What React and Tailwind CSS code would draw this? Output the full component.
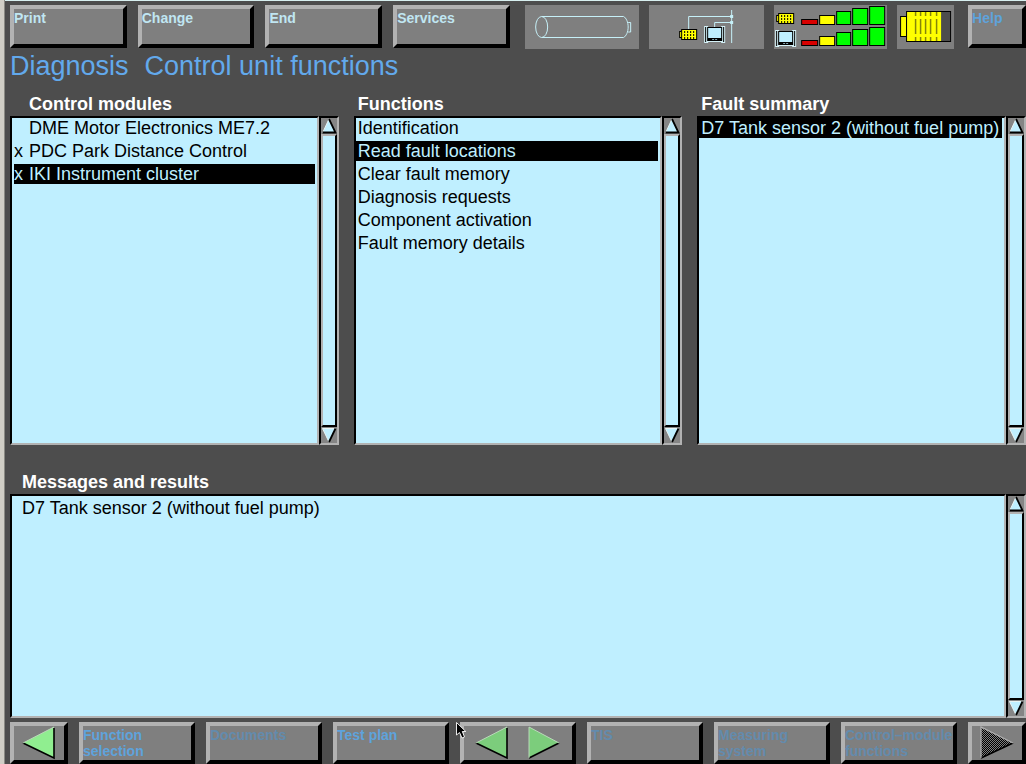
import React, { useState } from "react";

const bevel =
  "border-4 border-t-[#b2b2b2] border-l-[#b2b2b2] border-r-black border-b-black bg-[#7f7f7f]";

function TopButton({ label, tone = "text-[#c0e6f2]" }) {
  return (
    <button
      type="button"
      className={`flex h-[43px] w-full items-start overflow-hidden text-left text-sm leading-4 font-bold ${bevel} ${tone}`}
    >
      <span className="pt-px">{label}</span>
    </button>
  );
}

function FootButton({ children, disabled }) {
  return (
    <button
      type="button"
      disabled={disabled}
      className={`flex items-start overflow-hidden text-left text-sm leading-4 font-bold whitespace-pre ${bevel} ${
        disabled ? "text-[#638bad]" : "text-[#5ea3dc]"
      }`}
    >
      <span className="pt-px">{children}</span>
    </button>
  );
}

function GreenArrow({ direction, fill }) {
  return direction === "left" ? (
    <svg width="34" height="34" viewBox="0 0 34 34" aria-hidden="true">
      <path d="M1 17 L32 1 V32 Z" fill={fill} />
      <path d="M32 2 V32 L1 17" fill="none" stroke="#000" strokeWidth="1.6" />
      <path d="M1 17 L32 1" stroke="#b9d9b9" strokeWidth="1" />
    </svg>
  ) : (
    <svg width="34" height="34" viewBox="0 0 34 34" aria-hidden="true">
      <path d="M2 1 L32 17 L2 32 Z" fill={fill} />
      <path d="M2 32 L32 17" stroke="#000" strokeWidth="1.8" />
      <path d="M2 32 V1 L32 17" fill="none" stroke="#b9d9b9" strokeWidth="1" />
    </svg>
  );
}

function DimArrow() {
  return (
    <svg width="36" height="34" viewBox="0 0 36 34" aria-hidden="true">
      <defs>
        <pattern id="dots" width="2" height="2" patternUnits="userSpaceOnUse">
          <rect width="2" height="2" fill="#7f7f7f" />
          <rect width="1" height="1" fill="#000" />
          <rect x="1" y="1" width="1" height="1" fill="#000" />
        </pattern>
      </defs>
      <path d="M2 1 L34 17 L2 32 Z" fill="url(#dots)" />
      <path d="M2 32 L34 17" stroke="#000" strokeWidth="1.8" />
      <path d="M2 32 V1 L34 17" fill="none" stroke="#b2b2b2" strokeWidth="1.2" />
    </svg>
  );
}

function ScrollBar({ name }) {
  return (
    <div className="flex w-5 shrink-0 flex-col border-2 border-t-black border-r-[#b2b2b2] border-b-[#b2b2b2] border-l-black bg-[#858585]">
      <button type="button" aria-label={`Scroll ${name} up`} className="h-4 w-full">
        <svg className="block" width="16" height="16" viewBox="0 0 16 16">
          <path d="M8 1 L14.500 15 H1.500 Z" fill="#bfefff" />
          <path d="M8 1 L1.500 15" stroke="#e8f4f4" />
          <path d="M8 1 L14.500 14.500 H1.500" fill="none" stroke="#000" strokeWidth="1.8" />
        </svg>
      </button>
      <div className="flex-1 border-2 border-t-[#b2b2b2] border-r-black border-b-black border-l-[#b2b2b2] bg-[#bfefff]" />
      <button type="button" aria-label={`Scroll ${name} down`} className="h-4 w-full">
        <svg className="block" width="16" height="16" viewBox="0 0 16 16">
          <path d="M1.500 1.500 H14.500 L8 15 Z" fill="#bfefff" />
          <path d="M8 15 L1.500 1.500 H14.500" fill="none" stroke="#e8f4f4" />
          <path d="M14.500 1.500 L8 15" stroke="#000" strokeWidth="1.8" />
        </svg>
      </button>
    </div>
  );
}

function Pane({ name, children }) {
  return (
    <div className="flex min-h-0 flex-1">
      <div className="min-w-0 flex-1 border-2 border-t-black border-r-[#b2b2b2] border-b-[#b2b2b2] border-l-black bg-[#bfefff]">
        {children}
      </div>
      <ScrollBar name={name} />
    </div>
  );
}

function ListColumn({ title, items, initial, marked }) {
  const [selected, setSelected] = useState(initial);
  return (
    <section className="flex min-w-0 flex-col">
      <h2 className={`h-6 leading-[25px] font-bold text-white ${marked ? "pl-[19px]" : "pl-1"}`}>{title}</h2>
      <Pane name={title}>
        <ul className={`flex flex-col gap-[3px] pr-0.5 ${marked ? "pl-0.5" : "pl-0"}`}>
          {items.map((item, i) => (
            <li key={item.label}>
              <button
                type="button"
                aria-pressed={i === selected}
                onClick={() => setSelected(i)}
                className={`flex h-5 w-full overflow-hidden text-left leading-5 whitespace-nowrap ${
                  i === selected ? "bg-black text-[#bfefff]" : "text-black"
                } ${marked ? "" : "pl-0.5"}`}
              >
                {marked && <span className="w-[15px] shrink-0">{item.mark}</span>}
                {item.label}
              </button>
            </li>
          ))}
        </ul>
      </Pane>
    </section>
  );
}

function SmallBattery({ x, y }) {
  return (
    <g transform={`translate(${x} ${y})`}>
      <rect x="0.5" y="2.5" width="3" height="6" fill="#ff0" stroke="#000" />
      <rect x="2.5" y="0.5" width="15" height="10" fill="#ff0" stroke="#000" />
      <path
        d="M5.500 2V10M8.500 2V10M11.500 2V10M14.500 2V10"
        stroke="#000"
        strokeWidth="1"
        strokeDasharray="2 1"
      />
    </g>
  );
}

function Monitor({ x, y }) {
  return (
    <g transform={`translate(${x} ${y})`}>
      <path d="M0 0H4V1H17V0H21V17H17V16H4V17H0Z" fill="#d5f2f8" />
      <path d="M1.500 1V16M19.500 1V16" stroke="#000" />
      <rect x="3" y="1" width="15" height="14" fill="#000" />
      <rect x="4" y="2" width="13" height="10" fill="#bfefff" />
      <path d="M8 13.500H10M11 13.500H13" stroke="#bfefff" strokeWidth="0.7" />
    </g>
  );
}

const bars = [
  { x: 27.5, w: 16, fill: "#d80000", a: 14.5, b: 35.5 },
  { x: 45.5, w: 15, fill: "#ff0", a: 10.5, b: 31.5 },
  { x: 62.5, w: 14, fill: "#0f0", a: 6.5, b: 27.5 },
  { x: 78.5, w: 15, fill: "#0f0", a: 3.5, b: 24.5 },
  { x: 95.5, w: 15, fill: "#0f0", a: 1.5, b: 22.5 },
];

function StatusPanel({ label, box, children }) {
  return (
    <div className="h-11 bg-[#7f7f7f]">
      <svg className="block h-full w-full" viewBox={box} role="img" aria-label={label}>
        {children}
      </svg>
    </div>
  );
}

function StatusPanels() {
  return (
    <div className="grid min-w-0 flex-[430] grid-cols-[114fr_114fr_113fr_57fr] gap-2.5 pl-px">
      <StatusPanel label="Progress" box="0 0 114 44">
        <g fill="none" stroke="#c6f0f8">
          <ellipse cx="16.500" cy="22" rx="6" ry="10.500" />
          <path d="M16.500 11.500H98.500C101 13 103 17 103 22S101 31 98.500 32.500H16.500M103 17.500H105.500V27H103" />
        </g>
      </StatusPanel>
      <StatusPanel label="Network connection" box="0 0 114 44">
        <path d="M82.500 5V38M39.500 24V11.500H82M65.500 22V17.500H82" fill="none" stroke="#c6f0f8" />
        <path d="M81 10h3v3h-3zM81 16h3v3h-3z" fill="#c6f0f8" />
        <SmallBattery x={30} y={24} />
        <Monitor x={55} y={21} />
      </StatusPanel>
      <StatusPanel label="Signal strength" box="0 0 113 44">
        <SmallBattery x={2} y={8} />
        <Monitor x={1} y={25} />
        {bars.map((r) => (
          <g key={r.x} fill={r.fill} stroke="#000">
            <rect x={r.x} y={r.a} width={r.w} height={19.5 - r.a} />
            <rect x={r.x} y={r.b} width={r.w} height={40.5 - r.b} />
          </g>
        ))}
      </StatusPanel>
      <StatusPanel label="Battery level" box="0 0 57 44">
        <rect x="3.500" y="11.500" width="6" height="20" fill="#ff0" stroke="#000" />
        <rect x="9.500" y="6.500" width="44" height="30" fill="#4d4d4d" stroke="#000" />
        <rect x="10" y="7" width="34" height="29" fill="#ff0" />
        <path
          d="M18.500 7v4m0 3v15m0 3v4M23.500 7v4m0 3v15m0 3v4M28.500 7v4m0 3v15m0 3v4M33.500 7v4m0 3v15m0 3v4M39.500 7v4m0 3v15m0 3v4"
          stroke="#85850a"
          strokeWidth="1.500"
        />
      </StatusPanel>
    </div>
  );
}

const modules = [
  { mark: "", label: "DME Motor Electronics ME7.2" },
  { mark: "x", label: "PDC Park Distance Control" },
  { mark: "x", label: "IKI Instrument cluster" },
];

const functions = [
  { label: "Identification" },
  { label: "Read fault locations" },
  { label: "Clear fault memory" },
  { label: "Diagnosis requests" },
  { label: "Component activation" },
  { label: "Fault memory details" },
];

const faults = [{ label: "D7 Tank sensor 2 (without fuel pump)" }];

export default function App() {
  return (
    <div className="flex min-h-screen bg-[#4d4d4d] font-['Liberation_Sans',Arial,sans-serif] text-[18px]">
      <div className="w-[5px] shrink-0 border-r border-[#8a8a84] bg-[#d0cec6]" />
      <div className="flex min-w-0 flex-1 flex-col border-t border-[#d8f0f0] pl-[5px]">
        <header className="flex gap-3.5 pt-1">
          <nav className="grid min-w-0 flex-[501] grid-cols-4 gap-[11px]">
            <TopButton label="Print" />
            <TopButton label="Change" />
            <TopButton label="End" />
            <TopButton label="Services" />
          </nav>
          <StatusPanels />
          <div className="min-w-0 flex-[58]">
            <TopButton label="Help" tone="text-[#5ea3dc]" />
          </div>
        </header>

        <h1 className="flex h-[43px] gap-4 text-[27px] leading-[34px] text-[#62a9ec]">
          <span>Diagnosis</span>
          <span>Control unit functions</span>
        </h1>

        <main className="flex flex-1 flex-col">
          <div className="grid flex-[353] grid-cols-3 gap-[15px]">
            <ListColumn title="Control modules" items={modules} initial={2} marked />
            <ListColumn title="Functions" items={functions} initial={1} />
            <ListColumn title="Fault summary" items={faults} initial={0} />
          </div>
          <section className="mt-[25px] flex flex-[248] flex-col">
            <h2 className="h-6 pl-3 leading-[25px] font-bold text-white">Messages and results</h2>
            <Pane name="Messages">
              <p className="pt-0.5 pl-2.5 leading-5 text-black">D7 Tank sensor 2 (without fuel pump)</p>
            </Pane>
          </section>
        </main>

        <footer className="mt-1 grid h-[42px] grid-cols-[58fr_116fr_116fr_116fr_116fr_116fr_116fr_116fr_58fr] gap-[11px]">
          <button type="button" aria-label="Back" className={`flex items-center justify-center ${bevel}`}>
            <GreenArrow direction="left" fill="#90ee90" />
          </button>
          <FootButton>{"Function\nselection"}</FootButton>
          <FootButton disabled>Documents</FootButton>
          <FootButton>Test plan</FootButton>
          <div className={`relative flex items-center justify-center gap-[18px] ${bevel}`}>
            <button type="button" aria-label="Previous page">
              <GreenArrow direction="left" fill="#7ccd7c" />
            </button>
            <button type="button" aria-label="Next page">
              <GreenArrow direction="right" fill="#7ccd7c" />
            </button>
            <svg
              className="pointer-events-none absolute -top-1 -left-2"
              width="11"
              height="18"
              viewBox="0 0 11 18"
              aria-hidden="true"
            >
              <path
                d="M0.500 0.500 V13 L3.500 10.500 L6 16 L8.500 15 L6.300 9.500 H9.800 Z"
                fill="#000"
                stroke="#fff"
                strokeWidth="0.900"
              />
            </svg>
          </div>
          <FootButton disabled>TIS</FootButton>
          <FootButton disabled>{"Measuring\nsystem"}</FootButton>
          <FootButton disabled>{"Control–module\nfunctions"}</FootButton>
          <button type="button" disabled aria-label="Forward" className={`flex items-center justify-center ${bevel}`}>
            <DimArrow />
          </button>
        </footer>
      </div>
    </div>
  );
}
